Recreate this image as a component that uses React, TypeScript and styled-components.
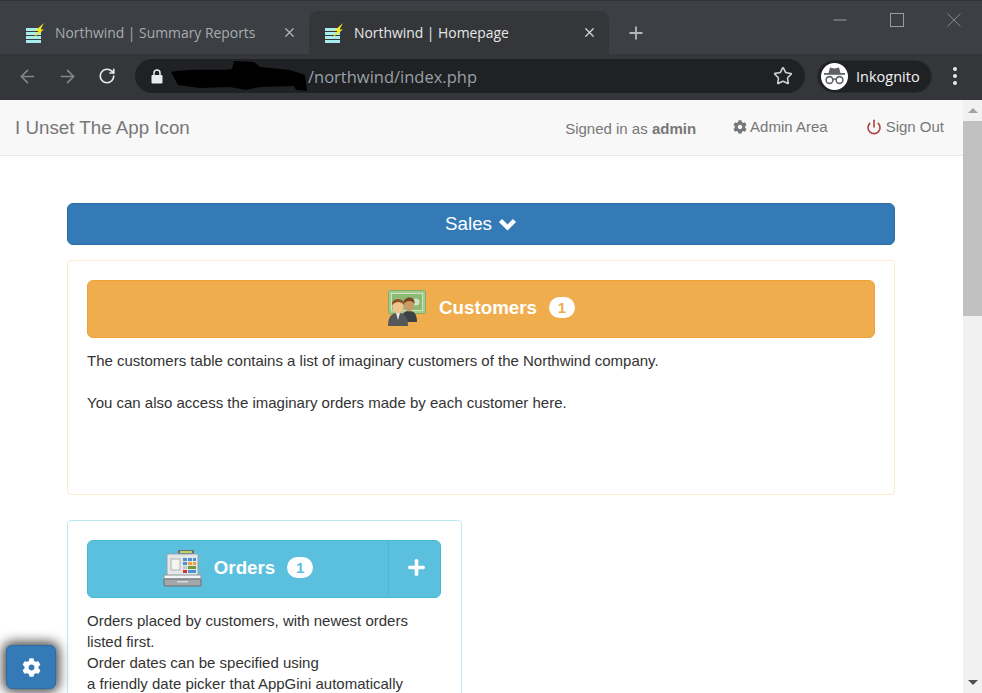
import styled, { createGlobalStyle } from 'styled-components';
import { ArrowLeft, ArrowRight, RotateCw, Star, X, Plus, Power } from 'lucide-react';
import { FaCog, FaPlus } from 'react-icons/fa';

const GlobalStyle = createGlobalStyle`
    html, body {
        margin: 0;
        padding: 0;
        width: 982px;
        height: 693px;
        overflow: hidden;
        background: #fff;
    }
    * {
        box-sizing: border-box;
    }
`;

const Window = styled.div`
    width: 982px;
    height: 693px;
    position: relative;
    display: flex;
    flex-direction: column;
    overflow: hidden;
    font-family: "Liberation Sans", Arial, sans-serif;
    font-size: 15px;
    color: #333;
`;

/* browser frame */
const TabStrip = styled.div`
    height: 54px;
    flex: none;
    display: flex;
    align-items: flex-end;
    background: #3c3f43;
    border-top: 1px solid #313336;
    padding-left: 10px;
`;
const Tab = styled.div<{ $active?: boolean }>`
    width: ${props => props.$active ? "300px" : "299px"};
    height: 43px;
    display: flex;
    align-items: center;
    padding: 0 12px 0 15px;
    border-radius: 9px 9px 0 0;
    background: ${props => props.$active ? "#35363a" : "transparent"};
    color: ${props => props.$active ? "#e6e7e8" : "#a9acaf"};
    font-family: "Open Sans", "Noto Sans", sans-serif;
    font-size: 13.9px;
`;
const TabTitle = styled.span`
    flex: 1;
    margin-left: 10px;
    white-space: nowrap;
`;
const NewTab = styled.div`
    width: 54px;
    height: 43px;
    display: flex;
    align-items: center;
    justify-content: center;
    color: #b4b6b8;
`;
const WindowControls = styled.div`
    margin-left: auto;
    align-self: flex-start;
    display: flex;
`;
const WindowButton = styled.div`
    width: 57px;
    height: 38px;
    display: flex;
    align-items: center;
    justify-content: center;
`;
const Toolbar = styled.div`
    height: 46px;
    flex: none;
    display: flex;
    align-items: center;
    padding: 0 10px 2px 7px;
    background: #35363a;
`;
const NavButton = styled.div<{ $dim?: boolean }>`
    width: 40px;
    display: flex;
    justify-content: center;
    color: ${props => props.$dim ? "#85878a" : "#e8eaed"};
`;
const Omnibox = styled.div`
    width: 670px;
    height: 34px;
    margin-left: 8px;
    display: flex;
    align-items: center;
    padding: 0 12px 0 16px;
    border-radius: 17px;
    background: #202124;
    color: #9aa0a6;
    font-family: "Open Sans", "Noto Sans", sans-serif;
    font-size: 16.5px;
`;
const Redaction = styled.svg`
    flex: none;
    margin: 0 0 0 7px;
`;
const Url = styled.span`
    flex: 1;
`;
const Profile = styled.div`
    width: 115px;
    height: 33px;
    margin-left: 12px;
    display: flex;
    align-items: center;
    gap: 8px;
    padding-left: 3px;
    border-radius: 17px;
    border: 1px solid #2a2b2e;
    background: #202124;
    color: #f1f3f4;
    font-family: "Open Sans", "Noto Sans", sans-serif;
    font-size: 14.5px;
`;
const Avatar = styled.div`
    width: 27px;
    height: 27px;
    flex: none;
    display: flex;
    align-items: center;
    justify-content: center;
    border-radius: 50%;
    background: #fff;
`;
const MenuDots = styled.div`
    margin-left: 21px;
    display: flex;
    flex-direction: column;
    gap: 3px;
`;
const Dot = styled.i`
    width: 4px;
    height: 4px;
    border-radius: 50%;
    background: #e8eaed;
`;

/* page */
const Viewport = styled.div`
    flex: 1;
    min-height: 0;
    display: flex;
`;
const Page = styled.div`
    flex: 1;
    min-width: 0;
    background: #fff;
`;
const Navbar = styled.div`
    height: 56px;
    display: flex;
    align-items: center;
    padding: 0 19px 0 15px;
    background: #f8f8f8;
    border-bottom: 1px solid #e7e7e7;
    color: #777;
`;
const Brand = styled.div`
    flex: 1;
    font-size: 18.75px;
`;
const SignedIn = styled.div`
    margin-top: 2px;
`;
const NavLink = styled.div<{ $gap: number; $left: number }>`
    display: flex;
    align-items: center;
    gap: ${props => props.$gap}px;
    margin-left: ${props => props.$left}px;
    margin-top: -2px;
`;
const Main = styled.div`
    padding: 47px 68px 0 67px;
`;
const GroupButton = styled.div`
    height: 42px;
    display: flex;
    align-items: center;
    justify-content: center;
    gap: 6px;
    border: 1px solid #2e6da4;
    border-radius: 6px;
    background: #337ab7;
    color: #fff;
    font-size: 18.75px;
`;
const Panel = styled.div<{ $info?: boolean; $half?: boolean }>`
    width: ${props => props.$half ? "395px" : "100%"};
    height: ${props => props.$half ? "200px" : "235px"};
    margin-top: ${props => props.$half ? "25px" : "15px"};
    padding: ${props => props.$half ? "19px 20px 19px 19px" : "19px"};
    border: 1px solid ${props => props.$info ? "#bce8f1" : "#faebcc"};
    border-radius: 4px;
    background: #fff;
`;
const TableButton = styled.div<{ $info?: boolean }>`
    height: 58px;
    display: flex;
    border: 1px solid ${props => props.$info ? "#46b8da" : "#eea236"};
    border-radius: 6px;
    background: ${props => props.$info ? "#5bc0de" : "#f0ad4e"};
    color: #fff;
    font-size: 18.75px;
    font-weight: 700;
`;
const ButtonMain = styled.div`
    flex: 1;
    display: flex;
    align-items: center;
    justify-content: center;
    gap: 12px;
    padding-bottom: 3px;
`;
const Badge = styled.span<{ $info?: boolean }>`
    min-width: 26px;
    height: 21px;
    display: flex;
    align-items: center;
    justify-content: center;
    border-radius: 10.5px;
    background: #fff;
    color: ${props => props.$info ? "#5bc0de" : "#f0ad4e"};
    font-size: 15px;
`;
const AddButton = styled.div`
    width: 52px;
    flex: none;
    display: flex;
    align-items: center;
    justify-content: center;
    padding: 0 0 3px 4px;
    border-left: 1px solid #46b8da;
    font-size: 19px;
`;
const Description = styled.div`
    margin-top: 12px;
    line-height: 21px;
`;

/* scrollbar */
const Scrollbar = styled.div`
    width: 19px;
    flex: none;
    display: flex;
    flex-direction: column;
    align-items: center;
    background: #f1f1f1;
`;
const ScrollArrow = styled.div<{ $down?: boolean }>`
    height: 21px;
    flex: none;
    display: flex;
    align-items: center;
    justify-content: center;
    &::after {
        content: "";
        border-left: 5px solid transparent;
        border-right: 5px solid transparent;
        ${props => props.$down ? "border-top: 5px solid #505050;" : "border-bottom: 5px solid #a3a3a3;"}
    }
`;
const ScrollThumb = styled.div`
    width: 100%;
    height: 195px;
    flex: none;
    background: #c1c1c1;
`;
const ScrollTrack = styled.div`
    flex: 1;
`;

const SettingsButton = styled.div`
    position: absolute;
    left: 6px;
    top: 645px;
    width: 50px;
    height: 44px;
    display: flex;
    align-items: center;
    justify-content: center;
    border: 1px solid #2e6da4;
    border-radius: 6px;
    background: #337ab7;
    color: #fff;
    font-size: 19px;
    box-shadow: 0 0 12px 3px rgba(0, 0, 0, 0.75);
`;

const FavIcon = () => (
    <svg width="20" height="20" viewBox="0 0 20 20">
        <rect x="1" y="5" width="15" height="3" fill="#a9ecec" />
        <rect x="1" y="9" width="15" height="3" fill="#a9ecec" />
        <rect x="1" y="13" width="15" height="3" fill="#a9ecec" />
        <rect x="1" y="17" width="15" height="3" fill="#a9ecec" />
        <path d="M19 0 L10 8 L13.5 8 L8 15 L19 6.5 L15.5 6.5 Z" fill="#f5e61e" />
    </svg>
);

const WinMinimize = () => (
    <svg width="14" height="14" viewBox="0 0 14 14"><path d="M0.5 7 H13.5" stroke="#9a9c9f" /></svg>
);
const WinMaximize = () => (
    <svg width="14" height="14" viewBox="0 0 14 14"><rect x="0.5" y="0.5" width="13" height="13" fill="none" stroke="#9a9c9f" /></svg>
);
const WinClose = () => (
    <svg width="14" height="14" viewBox="0 0 14 14"><path d="M0.5 0.5 L13.5 13.5 M13.5 0.5 L0.5 13.5" stroke="#85888b" /></svg>
);

const LockIcon = () => (
    <svg width="12" height="15" viewBox="0 0 12 15" style={{ flex: 'none' }}>
        <path d="M3 6.5 V4 a3 3 0 0 1 6 0 V6.5" fill="none" stroke="#e8eaed" strokeWidth="1.5" />
        <rect x="0.5" y="6" width="11" height="8.5" rx="1" fill="#e8eaed" />
    </svg>
);

const Chevron = () => (
    <svg width="19" height="14" viewBox="0 0 19 14">
        <path d="M2.5 3.5 L9.5 10.5 L16.5 3.5" fill="none" stroke="#fff" strokeWidth="4.4" />
    </svg>
);

const IncognitoIcon = () => (
    <svg width="23" height="20" viewBox="0 0 23 20" fill="none">
        <path d="M5.5 7 L7 1.5 L11.5 2.5 L16 1.5 L17.5 7 Z" fill="#5f6368" />
        <rect x="1" y="7" width="21" height="1.8" fill="#5f6368" />
        <circle cx="6.5" cy="14" r="3.4" stroke="#5f6368" strokeWidth="1.6" />
        <circle cx="16.5" cy="14" r="3.4" stroke="#5f6368" strokeWidth="1.6" />
        <path d="M10 13.5 Q11.5 12.5 13 13.5" stroke="#5f6368" strokeWidth="1.4" />
    </svg>
);

const CustomersIcon = () => (
    <svg width="40" height="38" viewBox="0 0 40 38">
        <rect x="1.5" y="1.5" width="37" height="23" rx="1" fill="#a5cb8b" stroke="#82ab6c" />
        <rect x="4.5" y="4.5" width="31" height="17" fill="#8cb975" stroke="#cfe3c0" />
        <circle cx="29" cy="13" r="3.5" fill="#cfe3c0" />
        <path d="M14 33 C14 24 18 22 22 22 C27 22 30 25 30 33 Z" fill="#3f4245" />
        <ellipse cx="22" cy="15.5" rx="5" ry="7" fill="#c99a63" />
        <path d="M16.5 15 C15.5 7 29 6 27.5 15 C25 11 20 11 16.5 15 Z" fill="#7a4522" />
        <path d="M1 37 C1 27 5 24 11 24 C17 24 21 27 21 37 Z" fill="#55585b" />
        <path d="M9 24 L11 31 L13 24 Z" fill="#e8e8e8" />
        <ellipse cx="11" cy="17" rx="5.5" ry="7.5" fill="#eec48c" />
        <path d="M5 16 C4 8 18 8 17 16 C14 12 9 12 5 16 Z" fill="#8a5228" />
    </svg>
);

const RegisterIcon = () => (
    <svg width="39" height="38" viewBox="0 0 39 38">
        <rect x="15" y="1" width="16" height="5" fill="#6d7072" />
        <rect x="17" y="2" width="12" height="2" fill="#b9d36a" />
        <rect x="4" y="5" width="31" height="23" rx="1" fill="#e3e7ea" stroke="#9ea3a7" />
        <rect x="8" y="10" width="9" height="11" fill="#f4f5f1" stroke="#aeb3b6" />
        <rect x="20" y="9" width="4" height="3" fill="#4e8fd0" />
        <rect x="25" y="9" width="4" height="3" fill="#4e8fd0" />
        <rect x="30" y="9" width="3" height="3" fill="#4e8fd0" />
        <rect x="20" y="13" width="4" height="3" fill="#4e8fd0" />
        <rect x="25" y="13" width="4" height="3" fill="#f0a040" />
        <rect x="30" y="13" width="3" height="3" fill="#f0a040" />
        <rect x="20" y="17" width="4" height="3" fill="#c5c9cc" />
        <rect x="25" y="17" width="8" height="3" fill="#6f9a3c" />
        <rect x="20" y="21" width="4" height="3" fill="#d83030" />
        <rect x="25" y="21" width="8" height="3" fill="#4e8fd0" />
        <rect x="1" y="26" width="37" height="4" fill="#f2f4f5" stroke="#8e9396" />
        <rect x="1" y="30" width="37" height="7" rx="1" fill="#a4a7a9" stroke="#6b6e70" />
        <rect x="14" y="32" width="11" height="1.5" fill="#d8dadb" />
    </svg>
);

const App = () => {
    return (
        <Window>
            <GlobalStyle />
            <TabStrip>
                <Tab>
                    <FavIcon />
                    <TabTitle>Northwind | Summary Reports</TabTitle>
                    <X size={15} color="#b4b6b8" strokeWidth={2} />
                </Tab>
                <Tab $active>
                    <FavIcon />
                    <TabTitle>Northwind | Homepage</TabTitle>
                    <X size={15} color="#d5d6d7" strokeWidth={2} />
                </Tab>
                <NewTab><Plus size={20} strokeWidth={2.2} /></NewTab>
                <WindowControls>
                    <WindowButton><WinMinimize /></WindowButton>
                    <WindowButton><WinMaximize /></WindowButton>
                    <WindowButton><WinClose /></WindowButton>
                </WindowControls>
            </TabStrip>
            <Toolbar>
                <NavButton $dim><ArrowLeft size={21} strokeWidth={1.8} /></NavButton>
                <NavButton $dim><ArrowRight size={21} strokeWidth={1.8} /></NavButton>
                <NavButton><RotateCw size={18} strokeWidth={2.2} /></NavButton>
                <Omnibox>
                    <LockIcon />
                    <Redaction width="138" height="32" viewBox="0 0 138 32">
                        <path d="M1 12 C20 8 50 11 62 9 L64 1 L84 2 L90 7 L120 10 L135 15 L137 31 L126 30 L124 26 L90 27 L76 30 L60 27 L30 28 L8 25 Z" fill="#000" />
                    </Redaction>
                    <Url>/northwind/index.php</Url>
                    <Star size={20} color="#cfd1d3" strokeWidth={1.9} />
                </Omnibox>
                <Profile>
                    <Avatar><IncognitoIcon /></Avatar>
                    Inkognito
                </Profile>
                <MenuDots><Dot /><Dot /><Dot /></MenuDots>
            </Toolbar>
            <Viewport>
                <Page>
                    <Navbar>
                        <Brand>I Unset The App Icon</Brand>
                        <SignedIn>Signed in as <b>admin</b></SignedIn>
                        <NavLink $gap={3} $left={37}><FaCog size={14} />Admin Area</NavLink>
                        <NavLink $gap={4} $left={38}><Power size={16} color="#a94442" strokeWidth={2.4} />Sign Out</NavLink>
                    </Navbar>
                    <Main>
                        <GroupButton>Sales <Chevron /></GroupButton>
                        <Panel>
                            <TableButton>
                                <ButtonMain>
                                    <CustomersIcon />
                                    Customers
                                    <Badge>1</Badge>
                                </ButtonMain>
                            </TableButton>
                            <Description>
                                The customers table contains a list of imaginary customers of the Northwind company.
                                <br /><br />
                                You can also access the imaginary orders made by each customer here.
                            </Description>
                        </Panel>
                        <Panel $info $half>
                            <TableButton $info>
                                <ButtonMain>
                                    <RegisterIcon />
                                    Orders
                                    <Badge $info>1</Badge>
                                </ButtonMain>
                                <AddButton><FaPlus /></AddButton>
                            </TableButton>
                            <Description>
                                Orders placed by customers, with newest orders listed first.
                                <br />
                                Order dates can be specified using
                                <br />
                                a friendly date picker that AppGini automatically
                            </Description>
                        </Panel>
                    </Main>
                </Page>
                <Scrollbar>
                    <ScrollArrow />
                    <ScrollThumb />
                    <ScrollTrack />
                    <ScrollArrow $down />
                </Scrollbar>
            </Viewport>
            <SettingsButton><FaCog /></SettingsButton>
        </Window>
    );
};

export default App;
